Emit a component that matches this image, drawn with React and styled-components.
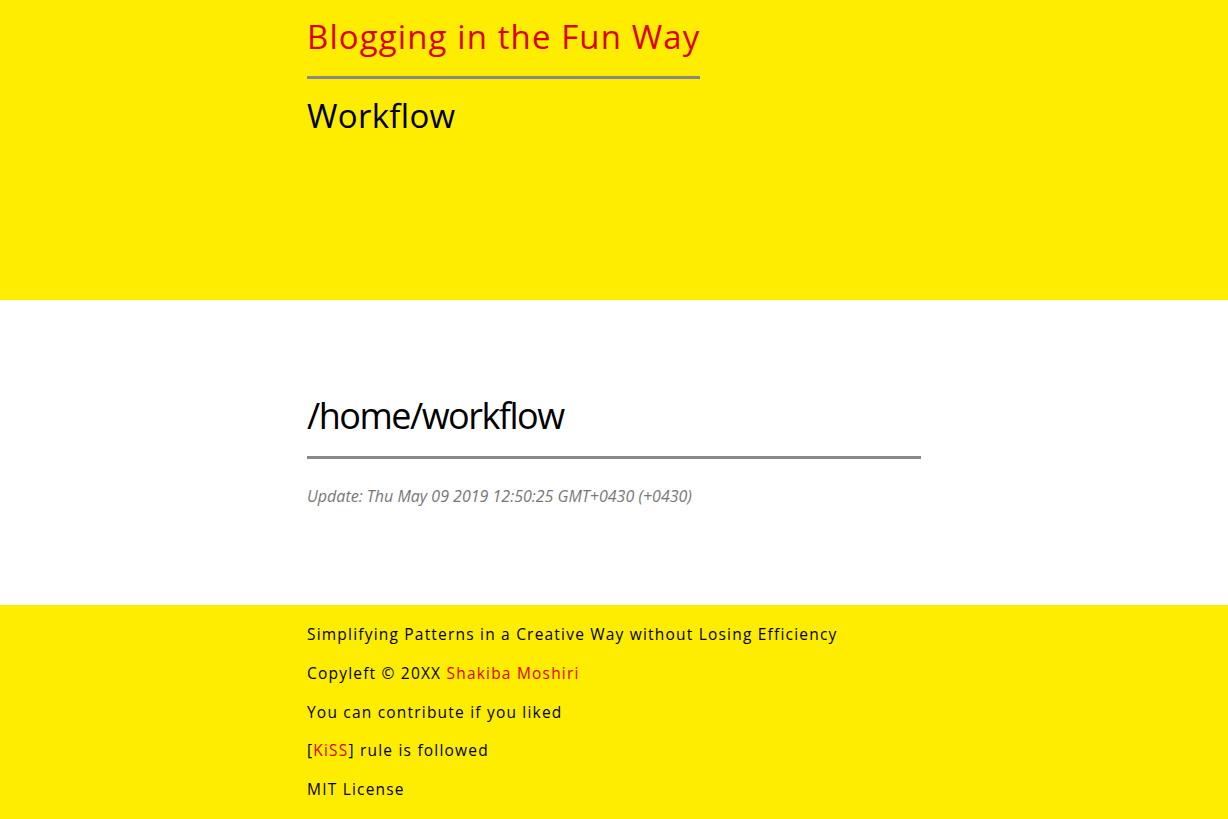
import React from 'react';
import styled, { createGlobalStyle } from 'styled-components';

const GlobalStyle = createGlobalStyle`
  body {
    margin: 0;
    font-family: "Open Sans", "DejaVu Sans", sans-serif;
    color: #000;
    background: #fff;
  }
`;

const Band = styled.section`
  background: ${(p) => (p.yellow ? '#ffed00' : '#fff')};
  height: ${(p) => p.h}px;
  box-sizing: border-box;
`;

const Wrap = styled.div`
  width: 50%;
  margin: 0 auto;
  padding-top: ${(p) => p.top || 0}px;
`;

const SiteTitle = styled.h1`
  display: inline-block;
  margin: 0;
  padding: 17px 0 19px;
  font-size: 33px;
  line-height: 40px;
  font-weight: 400;
  letter-spacing: 1.1px;
  color: #dd0000;
  border-bottom: 3px solid #888;
`;

const Section = styled.h2`
  margin: 17px 0 0;
  font-size: 33px;
  line-height: 40px;
  font-weight: 400;
  letter-spacing: 0.3px;
`;

const PageTitle = styled.h2`
  margin: 0;
  padding-bottom: 18px;
  font-size: 36px;
  line-height: 44px;
  font-weight: 400;
  letter-spacing: -1.5px;
  border-bottom: 3px solid #888;
`;

const Updated = styled.p`
  margin: 25px 0 0;
  font-size: 16px;
  line-height: 24px;
  font-style: italic;
  color: #777;
`;

const Line = styled.p`
  margin: 0;
  font-size: 15.5px;
  line-height: 38.75px;
  letter-spacing: 1.2px;
`;

const Red = styled.span`
  color: #dd0000;
`;

export default function App() {
  return (
    <>
      <GlobalStyle />
      <Band yellow h={300}>
        <Wrap>
          <SiteTitle>Blogging in the Fun Way</SiteTitle>
          <Section>Workflow</Section>
        </Wrap>
      </Band>
      <Band h={305}>
        <Wrap top={94}>
          <PageTitle>/home/workflow</PageTitle>
          <Updated>Update: Thu May 09 2019 12:50:25 GMT+0430 (+0430)</Updated>
        </Wrap>
      </Band>
      <Band yellow h={214}>
        <Wrap top={10}>
          <Line>Simplifying Patterns in a Creative Way without Losing Efficiency</Line>
          <Line>Copyleft © 20XX <Red>Shakiba Moshiri</Red></Line>
          <Line>You can contribute if you liked</Line>
          <Line>[<Red>KiSS</Red>] rule is followed</Line>
          <Line>MIT License</Line>
        </Wrap>
      </Band>
    </>
  );
}
